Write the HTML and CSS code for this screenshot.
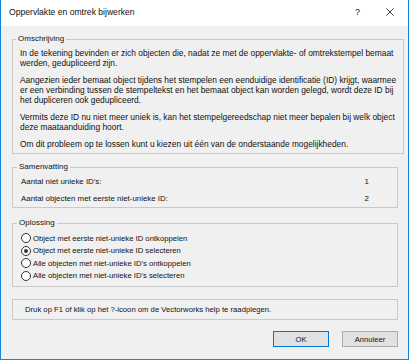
FILE: index.html
```html
<!DOCTYPE html>
<html lang="nl">
<head>
    <meta charset="UTF-8">
    <meta name="viewport" content="width=device-width, initial-scale=1.0">
    <title>Oppervlakte en omtrek bijwerken</title>
    <link rel="stylesheet" href="styles.css">
</head>
<body>
    <div class="window">
        <div class="titlebar">
            <span class="title">Oppervlakte en omtrek bijwerken</span>
            <span class="title-help">?</span>
            <span class="title-close">
                <svg width="8" height="8" viewBox="0 0 8 8">
                    <path d="M0.3 0.3 L7.7 7.7 M7.7 0.3 L0.3 7.7" stroke="#111" stroke-width="0.8" fill="none"/>
                </svg>
            </span>
        </div>

        <div class="content">
            <fieldset class="group description">
                <legend>Omschrijving</legend>
                <p>In de tekening bevinden er zich objecten die, nadat ze met de oppervlakte- of omtrekstempel bemaat<br>werden, gedupliceerd zijn.</p>
                <p>Aangezien ieder bemaat object tijdens het stempelen een eenduidige identificatie (ID) krijgt, waarmee<br>er een verbinding tussen de stempeltekst en het bemaat object kan worden gelegd, wordt deze ID bij<br>het dupliceren ook gedupliceerd.</p>
                <p>Vermits deze ID nu niet meer uniek is, kan het stempelgereedschap niet meer bepalen bij welk object<br>deze maataanduiding hoort.</p>
                <p>Om dit probleem op te lossen kunt u kiezen uit één van de onderstaande mogelijkheden.</p>
            </fieldset>

            <fieldset class="group summary">
                <legend>Samenvatting</legend>
                <div class="summary-row"><span>Aantal niet unieke ID's:</span><span class="value">1</span></div>
                <div class="summary-row"><span>Aantal objecten met eerste niet-unieke ID:</span><span class="value">2</span></div>
            </fieldset>

            <fieldset class="group options">
                <legend>Oplossing</legend>
                <label class="radio"><span class="radio-dot"></span>Object met eerste niet-unieke ID ontkoppelen</label>
                <label class="radio checked"><span class="radio-dot"></span>Object met eerste niet-unieke ID selecteren</label>
                <label class="radio"><span class="radio-dot"></span>Alle objecten met niet-unieke ID's ontkoppelen</label>
                <label class="radio"><span class="radio-dot"></span>Alle objecten met niet-unieke ID's selecteren</label>
            </fieldset>

            <div class="help-box">Druk op F1 of klik op het ?-icoon om de Vectorworks help te raadplegen.</div>

            <div class="buttons">
                <button class="btn btn-default">OK</button>
                <button class="btn">Annuleer</button>
            </div>
        </div>
    </div>
</body>
</html>
```

FILE: styles.css
```css
body {
    margin: 0;
    font-family: 'Liberation Sans', Arial, sans-serif;
    font-size: 8px;
    color: #111;
    background-color: #fff;
}

.window {
    width: 409px;
    height: 360px;
    box-sizing: border-box;
    border: 1px solid #1883d7;
    border-top: none;
    background-color: #f0f0f0;
    overflow: hidden;
}

.titlebar {
    height: 26px;
    background-color: #fff;
    display: flex;
    align-items: center;
    padding-left: 8px;
    font-size: 8.6px;
}

.title {
    flex: 1;
    padding-bottom: 2px;
}

.title-help {
    width: 31px;
    font-size: 9px;
    padding-bottom: 2px;
}

.title-close {
    width: 22px;
    display: flex;
    padding-bottom: 2px;
}

.content {
    padding: 8px 10px 0 11px;
}

.group {
    margin: 0;
    padding: 4px 7px 4px 7px;
    border: 1px solid #c9c9c9;
}

.group legend {
    line-height: 10px;
    padding: 0 2px;
    margin-left: -4px;
}

.description p {
    margin: 0 0 7px;
    line-height: 10px;
    font-size: 8.4px;
    white-space: nowrap;
}

.description p:last-child {
    margin-bottom: 0;
}

.summary {
    margin-top: 8px;
    padding: 5px 28px 3px 8px;
}

.summary-row {
    display: flex;
    justify-content: space-between;
    line-height: 10px;
    font-size: 7.9px;
}

.summary-row + .summary-row {
    margin-top: 7px;
}

.options {
    margin-top: 10px;
    padding: 4px 7px 4px 8px;
}

.radio {
    display: flex;
    align-items: center;
    height: 12.5px;
    gap: 2px;
    font-size: 7.7px;
}

.radio-dot {
    width: 8px;
    height: 8px;
    border: 1px solid #333;
    border-radius: 50%;
    background-color: #fff;
    display: flex;
    align-items: center;
    justify-content: center;
}

.radio.checked .radio-dot::after {
    content: '';
    width: 4px;
    height: 4px;
    border-radius: 50%;
    background-color: #333;
}

.help-box {
    margin-top: 12px;
    height: 19px;
    border: 1px solid #c9c9c9;
    display: flex;
    align-items: center;
    padding-left: 12px;
    font-size: 7.7px;
}

.buttons {
    display: flex;
    justify-content: flex-end;
    gap: 13px;
    margin-top: 11px;
}

.btn {
    width: 56px;
    height: 16px;
    padding: 0;
    font-family: inherit;
    font-size: 7.6px;
    background-color: #e1e1e1;
    border: 1px solid #adadad;
    color: #111;
}

.btn-default {
    border-color: #0078d7;
}
```
